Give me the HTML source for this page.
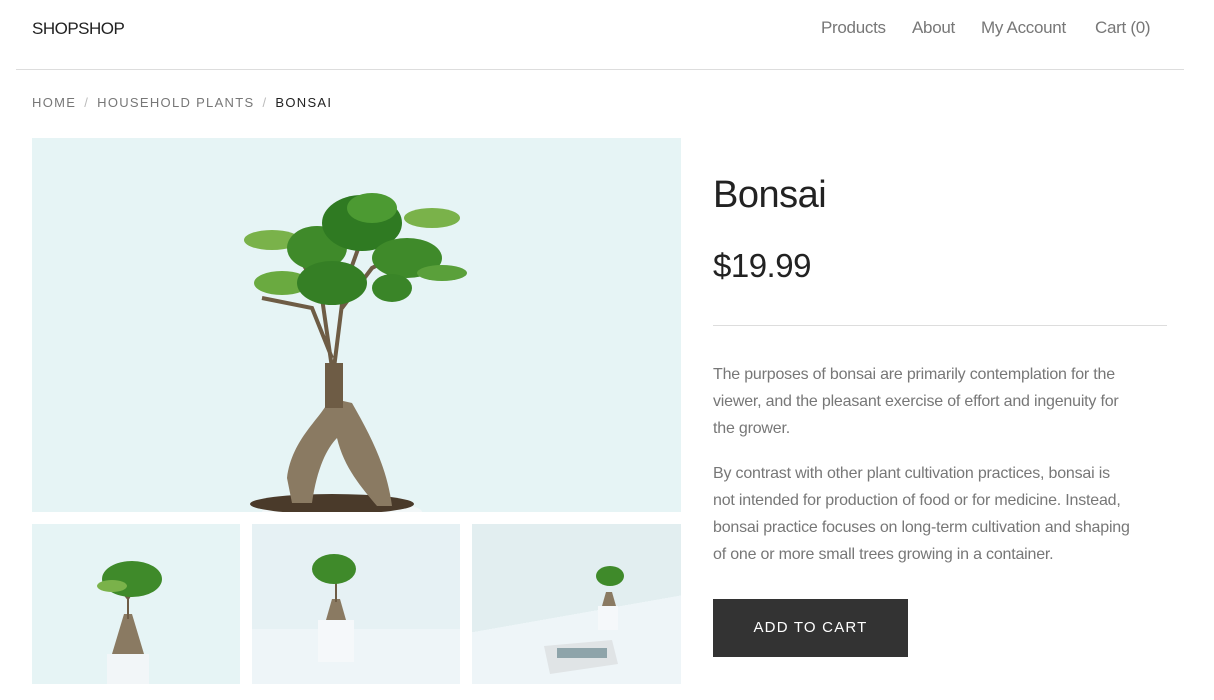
<!DOCTYPE html>
<html><head><meta charset="utf-8"><style>
*{margin:0;padding:0;box-sizing:border-box}
body{width:1214px;height:700px;background:#fff;font-family:"Liberation Sans",sans-serif;position:relative;overflow:hidden;color:#333}
.a{position:absolute}
.logo{left:32px;top:19px;font-size:17px;color:#222;letter-spacing:-0.5px}
.nav{top:18px;font-size:17px;color:#777;letter-spacing:-0.3px}
.hr{left:16px;width:1168px;top:69px;height:1px;background:#ddd}
.bc{left:32px;top:95px;font-size:13px;letter-spacing:1.3px;color:#777}
.bc b{font-weight:normal;color:#222}
.bc i{font-style:normal;color:#bbb;margin:0 8px}
.img{background:#e6f4f5;overflow:hidden}
h1{position:absolute;left:713px;top:174px;font-weight:normal;font-size:38px;color:#222;letter-spacing:-0.5px}
.price{left:713px;top:247px;font-size:33px;color:#222;letter-spacing:-0.5px}
.line{left:713px;top:325px;width:454px;height:1px;background:#ddd}
p{position:absolute;left:713px;width:420px;font-size:16px;line-height:27px;color:#777;letter-spacing:-0.2px}
.btn{left:713px;top:599px;width:195px;height:58px;background:#333;color:#fff;font-size:15px;letter-spacing:1.2px;text-align:center;line-height:58px}
</style></head><body>
<div class="a logo">SHOPSHOP</div>
<div class="a nav" style="left:821px">Products</div>
<div class="a nav" style="left:912px">About</div>
<div class="a nav" style="left:981px">My Account</div>
<div class="a nav" style="left:1095px">Cart (0)</div>
<div class="a hr"></div>
<div class="a bc">HOME<i>/</i>HOUSEHOLD PLANTS<i>/</i><b>BONSAI</b></div>

<div class="a img" style="left:32px;top:138px;width:649px;height:374px">
<svg width="649" height="374" viewBox="0 0 649 374">
<ellipse cx="310" cy="374" rx="80" ry="12" fill="#f2f7f8"/>
<ellipse cx="300" cy="366" rx="82" ry="10" fill="#4a3a2a"/>
<path d="M298 260 C290 280 260 300 255 340 L260 365 L280 365 C285 330 295 310 305 300 C312 330 330 350 345 368 L360 368 C355 330 340 300 320 265 Z" fill="#8a7a62"/>
<rect x="293" y="225" width="18" height="45" fill="#6e5c45"/>
<path d="M300 230 L290 160 L268 120 M302 230 L312 150 L330 100 M300 220 L280 170 L230 160 M310 170 L340 130 L380 110" stroke="#6e5c45" stroke-width="4" fill="none"/>
<g fill="#3f8a2a">
<ellipse cx="250" cy="145" rx="28" ry="12" fill="#6aaa40"/>
<ellipse cx="240" cy="102" rx="28" ry="10" fill="#7ab24a"/>
<ellipse cx="285" cy="110" rx="30" ry="22"/>
<ellipse cx="330" cy="85" rx="40" ry="28" fill="#2f7a22"/>
<ellipse cx="375" cy="120" rx="35" ry="20"/>
<ellipse cx="300" cy="145" rx="35" ry="22" fill="#357f25"/>
<ellipse cx="340" cy="70" rx="25" ry="15" fill="#4c9a32"/>
<ellipse cx="400" cy="80" rx="28" ry="10" fill="#7ab24a"/>
<ellipse cx="410" cy="135" rx="25" ry="8" fill="#5aa03a"/>
<ellipse cx="360" cy="150" rx="20" ry="14" fill="#3a8528"/>
</g></svg></div>

<div class="a img" style="left:32px;top:524px;width:208px;height:160px">
<svg width="208" height="160"><rect x="75" y="130" width="42" height="30" fill="#f2f6f8"/><path d="M92 90 L80 130 L112 130 L100 90Z" fill="#8a7a62"/><path d="M96 95 L96 65 M96 75 L80 55 M96 75 L112 50" stroke="#6e5c45" stroke-width="2" fill="none"/><ellipse cx="100" cy="55" rx="30" ry="18" fill="#3f8a2a"/><ellipse cx="80" cy="62" rx="15" ry="6" fill="#7ab24a"/></svg></div>
<div class="a img" style="left:252px;top:524px;width:208px;height:160px;background:linear-gradient(#e6f1f4 0 105px,#eef5f8 105px)">
<svg width="208" height="160"><rect x="66" y="96" width="36" height="42" fill="#f5f8fa"/><path d="M74 96 L80 75 L88 75 L94 96Z" fill="#8a7a62"/><path d="M84 78 L84 50" stroke="#6e5c45" stroke-width="2"/><ellipse cx="82" cy="45" rx="22" ry="15" fill="#3f8a2a"/></svg></div>
<div class="a img" style="left:472px;top:524px;width:209px;height:160px;background:linear-gradient(170deg,#e2eef0 0 55%,#eef5f8 55%)">
<svg width="209" height="160"><rect x="126" y="82" width="20" height="24" fill="#f5f8fa"/><path d="M130 82 L134 68 L140 68 L144 82Z" fill="#8a7a62"/><ellipse cx="138" cy="52" rx="14" ry="10" fill="#3f8a2a"/><path d="M72 122 L140 116 L146 140 L78 150Z" fill="#e0e4e6"/><rect x="85" y="124" width="50" height="10" fill="#8ea4aa"/></svg></div>

<h1>Bonsai</h1>
<div class="a price">$19.99</div>
<div class="a line"></div>
<p style="top:361px">The purposes of bonsai are primarily contemplation for the viewer, and the pleasant exercise of effort and ingenuity for the grower.</p>
<p style="top:460px">By contrast with other plant cultivation practices, bonsai is not intended for production of food or for medicine. Instead, bonsai practice focuses on long-term cultivation and shaping of one or more small trees growing in a container.</p>
<div class="a btn">ADD TO CART</div>
</body></html>
